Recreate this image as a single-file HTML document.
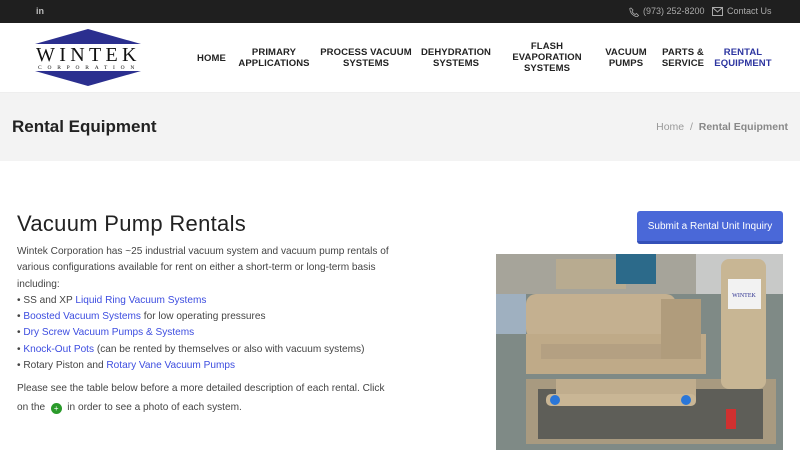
<!DOCTYPE html>
<html><head><meta charset="utf-8"><style>
*{margin:0;padding:0;box-sizing:border-box}
body{width:800px;height:450px;overflow:hidden;background:#fff;font-family:"Liberation Sans",sans-serif;position:relative}
.top{position:absolute;left:0;top:0;width:800px;height:23px;background:#1f1f1f;color:#aaa;font-size:9px}
.ni{position:absolute;font-size:9.5px;font-weight:bold;color:#222;text-align:center;line-height:11px;letter-spacing:0.1px}
.band{position:absolute;left:0;top:92px;width:800px;height:69px;background:#f3f3f3;border-top:1px solid #eee}
p{font-size:10.1px;color:#444;line-height:16.3px}
a{color:#3d4de0;text-decoration:none}
</style></head><body>
<div class="top">
 <span style="position:absolute;left:36px;top:6px;font-weight:bold;font-size:9px;color:#bbb">in</span>
 <svg style="position:absolute;left:629px;top:7px" width="10" height="10" viewBox="0 0 10 10"><path d="M2 1l2 2-1 1.5c.8 1.5 1.5 2.2 3 3L7.5 6.5l2 2-1.5 1.3C4 9 1 6 .8 1.5z" fill="none" stroke="#aaa" stroke-width=".8"/></svg>
 <span style="position:absolute;left:643px;top:6px">(973) 252-8200</span>
 <svg style="position:absolute;left:712px;top:7px" width="11" height="9"><rect x=".5" y=".5" width="10" height="8" fill="none" stroke="#aaa"/><path d="M.5 .5l5 4.5 5-4.5" fill="none" stroke="#aaa"/></svg>
 <span style="position:absolute;left:727px;top:6px">Contact Us</span>
</div>
<svg style="position:absolute;left:33px;top:29px" width="110" height="58" viewBox="0 0 110 58">
 <polygon points="2,15 55,0 108,15" fill="#2b2f8f"/>
 <polygon points="2,42 108,42 55,57" fill="#2b2f8f"/>
 <text x="55" y="32" font-family="Liberation Serif" font-size="20" text-anchor="middle" letter-spacing="3.5" fill="#111" textLength="104">WINTEK</text>
 <text x="55" y="40" font-family="Liberation Serif" font-size="5.5" text-anchor="middle" letter-spacing="3.6" fill="#111" textLength="100">CORPORATION</text>
</svg>
<div class="ni" style="left:197px;top:53px">HOME</div>
<div class="ni" style="left:238px;top:47px;width:72px">PRIMARY APPLICATIONS</div>
<div class="ni" style="left:320px;top:47px;width:92px">PROCESS VACUUM SYSTEMS</div>
<div class="ni" style="left:418px;top:47px;width:76px">DEHYDRATION SYSTEMS</div>
<div class="ni" style="left:508px;top:41px;width:78px">FLASH EVAPORATION SYSTEMS</div>
<div class="ni" style="left:601px;top:47px;width:50px">VACUUM PUMPS</div>
<div class="ni" style="left:660px;top:47px;width:46px">PARTS &amp; SERVICE</div>
<div class="ni" style="left:712px;top:47px;width:62px;color:#2d35a0">RENTAL EQUIPMENT</div>
<div class="band">
 <div style="position:absolute;left:12px;top:24px;font-size:17px;font-weight:bold;color:#222">Rental Equipment</div>
 <div style="position:absolute;right:12px;top:28px;font-size:10.5px;color:#999">Home &nbsp;/&nbsp; <b style="color:#888">Rental Equipment</b></div>
</div>
<div style="position:absolute;left:17px;top:211px;font-size:22px;color:#222;letter-spacing:0.3px">Vacuum Pump Rentals</div>
<div style="position:absolute;left:17px;top:244px;width:372px">
<p>Wintek Corporation has ~25 industrial vacuum system and vacuum pump rentals of various configurations available for rent on either a short-term or long-term basis including:</p>
<p>• SS and XP <a>Liquid Ring Vacuum Systems</a></p>
<p>• <a>Boosted Vacuum Systems</a> for low operating pressures</p>
<p>• <a>Dry Screw Vacuum Pumps &amp; Systems</a></p>
<p>• <a>Knock-Out Pots</a> (can be rented by themselves or also with vacuum systems)</p>
<p>• Rotary Piston and <a>Rotary Vane Vacuum Pumps</a></p>
<p style="margin-top:6px;line-height:18.5px">Please see the table below before a more detailed description of each rental. Click on the &nbsp;<span style="display:inline-block;width:11px;height:11px;border-radius:50%;background:#2a9a2a;vertical-align:-1px;color:#fff;font-size:8px;text-align:center;line-height:11px">+</span>&nbsp; in order to see a photo of each system.</p>
</div>
<div style="position:absolute;left:637px;top:211px;width:146px;height:33px;background:#4a68d8;border-radius:3px;border-bottom:3px solid #3450b8;color:#fff;font-size:10px;text-align:center;line-height:31px">Submit a Rental Unit Inquiry</div>
<svg style="position:absolute;left:496px;top:254px" width="287" height="196" viewBox="0 0 287 196">
 <rect width="287" height="196" fill="#8e9590"/>
 <rect width="287" height="40" fill="#a6a49a"/>
 <rect x="0" y="40" width="287" height="156" fill="#7f8a86"/>
 <rect x="60" y="5" width="70" height="30" fill="#b8ab90"/>
 <rect x="120" y="0" width="40" height="30" fill="#2c6a8a"/>
 <rect x="200" y="0" width="87" height="40" fill="#c8c9c8"/>
 <rect x="0" y="40" width="30" height="40" fill="#9fb0c0"/>
 <rect x="30" y="125" width="250" height="65" fill="#a89a80"/>
 <rect x="42" y="135" width="225" height="50" fill="#5e5e58"/>
 <rect x="30" y="40" width="150" height="45" rx="10" fill="#c4b090"/>
 <rect x="30" y="80" width="180" height="40" fill="#bfaa88"/>
 <rect x="45" y="90" width="160" height="15" fill="#b4a082"/>
 <rect x="60" y="125" width="140" height="20" fill="#c0ad8d"/>
 <rect x="225" y="5" width="45" height="130" rx="8" fill="#c8b694"/>
 <rect x="232" y="25" width="33" height="30" fill="#f2f2f2"/>
 <text x="248" y="43" font-size="6" text-anchor="middle" font-family="Liberation Serif" fill="#2b2f8f">WINTEK</text>
 <rect x="165" y="45" width="40" height="60" fill="#b09c7c"/>
 <rect x="50" y="140" width="150" height="12" rx="5" fill="#c9b695"/>
 <circle cx="59" cy="146" r="5" fill="#2a76d8"/><circle cx="190" cy="146" r="5" fill="#2a76d8"/>
 <rect x="230" y="155" width="10" height="20" fill="#d03030"/>
</svg>
</body></html>
